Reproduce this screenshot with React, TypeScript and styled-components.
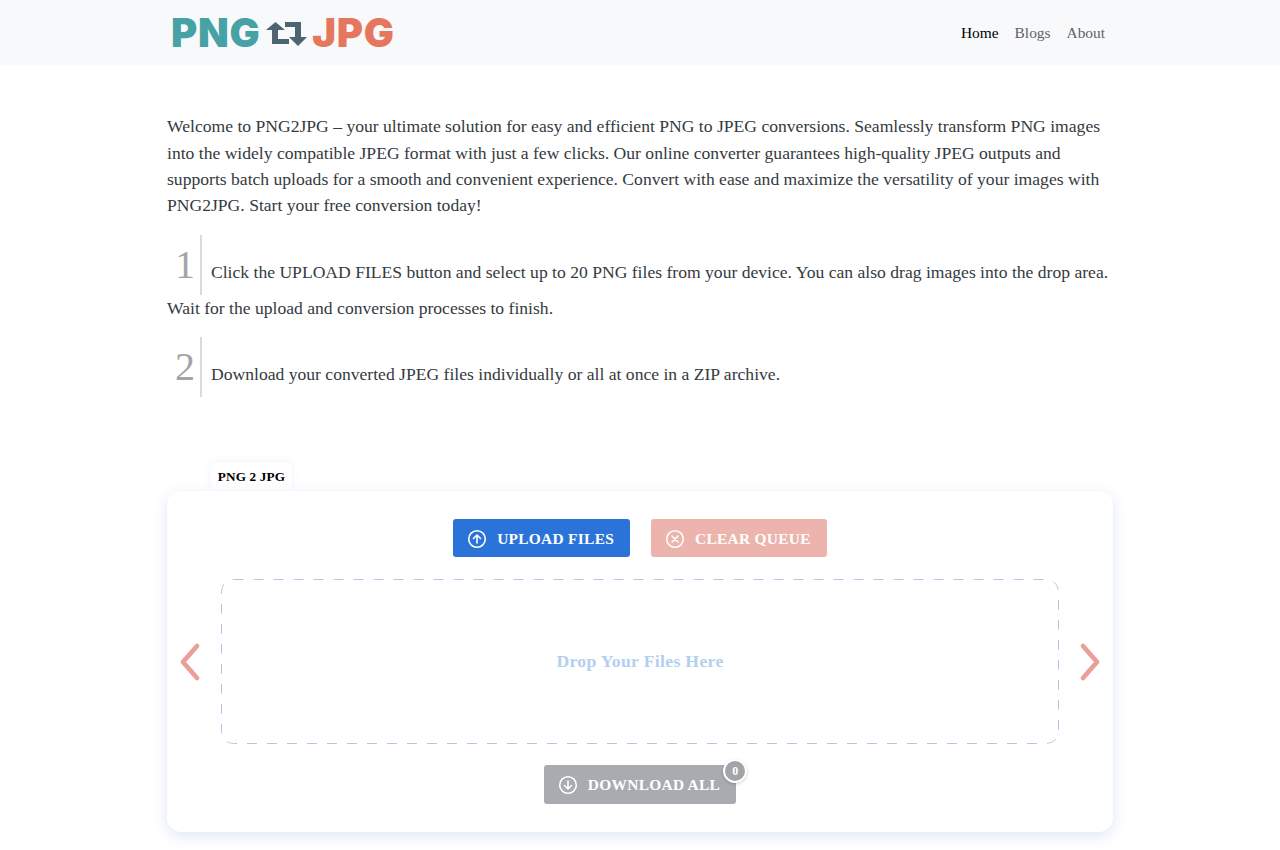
import * as React from "react";
import styled, { createGlobalStyle } from "styled-components";

const GlobalStyle = createGlobalStyle`
  html, body {
    margin: 0;
    padding: 0;
    background: #fff;
  }
  body {
    font-family: "Liberation Serif", "Times New Roman", serif;
    font-size: 17.6px;
    line-height: 1.5;
    color: #343a40;
  }
`;

const Header = styled.header`
  height: 65px;
  background: #f8f9fa;
`;

const HeaderInner = styled.div`
  width: 946px;
  height: 100%;
  margin: 0 auto;
  display: flex;
  align-items: center;
  justify-content: space-between;
`;

const Logo = styled.div`
  display: flex;
  align-items: center;
  height: 40px;
  margin-left: 4px;
`;

const LogoWord = styled.span<{ $color: string }>`
  font-family: "Inter", "Liberation Sans", sans-serif;
  font-weight: 900;
  font-size: 40px;
  line-height: 40px;
  letter-spacing: 0.7px;
  color: ${(p) => p.$color};
`;

const LogoArrows = styled.svg`
  width: 42px;
  height: 26px;
  margin: 0 4px 0 6px;
  flex: none;
`;

const Nav = styled.nav`
  display: flex;
`;

const NavLink = styled.a<{ $active?: boolean }>`
  padding: 1px 8px 0;
  font-size: 15.4px;
  color: ${(p) => (p.$active ? "#000" : "#5f6368")};
  text-decoration: none;
`;

const Main = styled.main`
  width: 946px;
  margin: 0 auto;
  padding: 48.2px 0 18px;
`;

const Paragraph = styled.p`
  margin: 0 0 16px;
`;

const StepNumber = styled.span`
  display: inline-block;
  height: 60px;
  margin-right: 9px;
  padding: 0 5px 0 8px;
  border-right: 2px solid #d9dadc;
  font-size: 40px;
  line-height: 60px;
  color: #a2a4aa;
`;

const Converter = styled.section`
  margin-top: 65px;
`;

const Tab = styled.div`
  width: 81px;
  height: 29px;
  margin-left: 44px;
  position: relative;
  z-index: 1;
  background: #fff;
  border-radius: 5px 5px 0 0;
  box-shadow: 0 -1px 7px rgba(50, 100, 210, 0.08);
  text-align: center;
  font-size: 13.2px;
  font-weight: 700;
  line-height: 30px;
  letter-spacing: 0.15px;
  color: #000;
`;

const Card = styled.div`
  position: relative;
  z-index: 2;
  height: 341px;
  box-sizing: border-box;
  padding-top: 28px;
  background: #fff;
  border-radius: 14px;
  box-shadow: 0 4px 14px rgba(50, 100, 210, 0.16);
`;

const ButtonRow = styled.div`
  display: flex;
  justify-content: center;
  gap: 21px;
`;

const ActionButton = styled.button<{ $bg: string; $tall?: boolean }>`
  display: flex;
  align-items: center;
  gap: 10px;
  height: ${(p) => (p.$tall ? "39px" : "38px")};
  padding: 1px 16px 0 14px;
  border: 0;
  border-radius: 3px;
  background: ${(p) => p.$bg};
  color: #fff;
  font-family: inherit;
  font-size: 15.4px;
  font-weight: 700;
  letter-spacing: 0.3px;
  white-space: nowrap;
  position: relative;
`;

const DropRow = styled.div`
  display: grid;
  grid-template-columns: 54px 1fr 54px;
  align-items: center;
  margin: 22px 0 21px;
`;

const Chevron = styled.svg<{ $flip?: boolean }>`
  width: 22px;
  height: 40px;
  justify-self: ${(p) => (p.$flip ? "end" : "start")};
  margin: ${(p) => (p.$flip ? "0 12px 0 0" : "0 0 0 12px")};
`;

const DropArea = styled.div`
  height: 165px;
  box-sizing: border-box;
  display: flex;
  align-items: center;
  justify-content: center;
  border-radius: 12px;
  background-image: url("data:image/svg+xml,%3Csvg xmlns='http://www.w3.org/2000/svg' width='100%25' height='100%25'%3E%3Crect x='.5' y='.5' width='837' height='164' rx='12' fill='none' stroke='%23adc8e6' stroke-dasharray='10 10'/%3E%3C/svg%3E");
  color: #b3cfee;
  font-size: 17.6px;
  font-weight: 700;
  letter-spacing: 0.35px;
`;

const Badge = styled.span`
  position: absolute;
  top: -6px;
  right: -11px;
  width: 20px;
  height: 20px;
  border: 2px solid #fff;
  border-radius: 50%;
  background: #a2a4aa;
  box-shadow: 0 1px 3px rgba(0, 0, 0, 0.2);
  color: #fff;
  font-size: 12px;
  line-height: 20px;
  letter-spacing: 0;
  text-align: center;
`;

const IconSvg = styled.svg`
  width: 20px;
  height: 20px;
  flex: none;
`;

const ButtonIcon = ({ inner }: { inner: string }) => (
  <IconSvg viewBox="0 0 20 20" fill="none" stroke="#fff" strokeWidth="1.6" strokeLinecap="round" strokeLinejoin="round">
    <circle cx="10" cy="10" r="8.3" />
    <path d={inner} />
  </IconSvg>
);

const ArrowChevron = ({ flip }: { flip?: boolean }) => (
  <Chevron $flip={flip} viewBox="0 0 22 40" fill="none">
    <path
      d={flip ? "M4 4 L18 20 L4 36" : "M18 4 L4 20 L18 36"}
      stroke="#e8a097"
      strokeWidth="4.8"
      strokeLinecap="round"
      strokeLinejoin="round"
    />
  </Chevron>
);

const App = (): React.ReactElement => {
  return (
    <>
      <GlobalStyle />
      <Header>
        <HeaderInner>
          <Logo>
            <LogoWord $color="#46a2a5">PNG</LogoWord>
            <LogoArrows viewBox="0 0 42 26">
              <path
                fill="#4d6570"
                d="M9.5 2 L19 10 H12 V19 H23 V24 H6 V10 H0 Z M32 26 L23 17 H29 V7 H19 V2 H35 V17 H41 Z"
              />
            </LogoArrows>
            <LogoWord $color="#e5775f">JPG</LogoWord>
          </Logo>
          <Nav>
            <NavLink $active href="#">
              Home
            </NavLink>
            <NavLink href="#">Blogs</NavLink>
            <NavLink href="#">About</NavLink>
          </Nav>
        </HeaderInner>
      </Header>
      <Main>
        <Paragraph>
          Welcome to PNG2JPG – your ultimate solution for easy and efficient PNG to JPEG
          conversions. Seamlessly transform PNG images into the widely compatible JPEG format with
          just a few clicks. Our online converter guarantees high-quality JPEG outputs and supports
          batch uploads for a smooth and convenient experience. Convert with ease and maximize the
          versatility of your images with PNG2JPG. Start your free conversion today!
        </Paragraph>
        <Paragraph>
          <StepNumber>1</StepNumber>
          Click the UPLOAD FILES button and select up to 20 PNG files from your device. You can also
          drag images into the drop area. Wait for the upload and conversion processes to finish.
        </Paragraph>
        <Paragraph>
          <StepNumber>2</StepNumber>
          Download your converted JPEG files individually or all at once in a ZIP archive.
        </Paragraph>
        <Converter>
          <Tab>PNG 2 JPG</Tab>
          <Card>
            <ButtonRow>
              <ActionButton $bg="#2a74d9">
                <ButtonIcon inner="M10 14V6 M6.5 9.5 L10 6 L13.5 9.5" />
                UPLOAD FILES
              </ActionButton>
              <ActionButton $bg="#ecb4ad">
                <ButtonIcon inner="M7 7 L13 13 M13 7 L7 13" />
                CLEAR QUEUE
              </ActionButton>
            </ButtonRow>
            <DropRow>
              <ArrowChevron />
              <DropArea>Drop Your Files Here</DropArea>
              <ArrowChevron flip />
            </DropRow>
            <ButtonRow>
              <ActionButton $bg="#a9abb1" $tall>
                <ButtonIcon inner="M10 6V14 M6.5 10.5 L10 14 L13.5 10.5" />
                DOWNLOAD ALL
                <Badge>0</Badge>
              </ActionButton>
            </ButtonRow>
          </Card>
        </Converter>
      </Main>
    </>
  );
};

export default App;
